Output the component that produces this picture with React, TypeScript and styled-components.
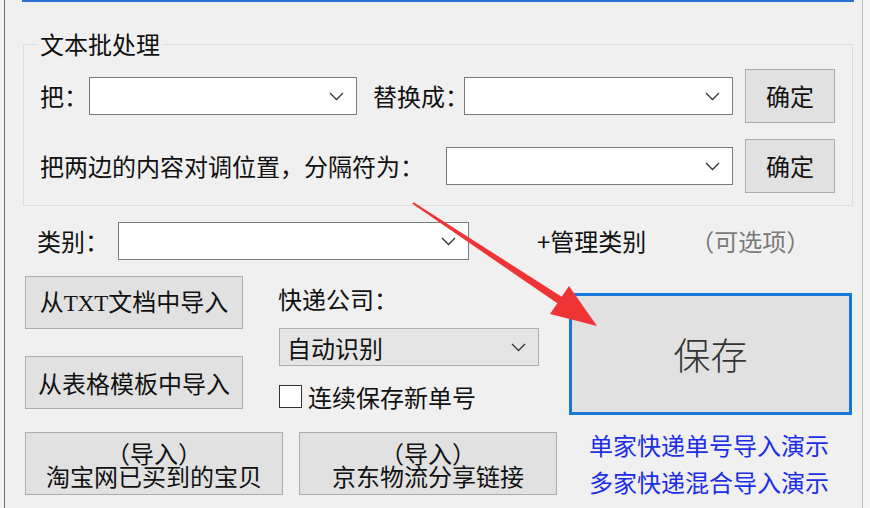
import React from 'react';
import styled, {createGlobalStyle} from 'styled-components';

const Global = createGlobalStyle`
  html, body {
    margin: 0;
    padding: 0;
    background: #f0f0f0;
  }
  * { box-sizing: border-box; }
`

const Screen = styled.div`
  position: relative;
  width: 870px;
  height: 508px;
  overflow: hidden;
  background: #f5f5f5;
  font-family: "Noto Sans CJK SC", "Noto Sans", sans-serif;
  font-size: 24px;
  color: #111;
`

const Frame = styled.div`
  margin-left: 4px;
  width: 859px;
  height: 508px;
  background: #f0f0f0;
  border-left: 1px solid #6e6e6e;
  border-right: 1px solid #bdbdbd;
  display: flex;
  flex-direction: column;
`

const FocusLine = styled.div`
  height: 2px;
  margin: 0 8px 0 17px;
  background: #2a6fd6;
`

const Group = styled.fieldset`
  margin: 27px 9px 0 18px;
  padding: 0 16px 0 12px;
  height: 177px;
  border: 1px solid #dcdcdc;
  min-width: 0;
`

const Legend = styled.legend`
  padding: 0 4px;
  line-height: 30px;
  font-size: 24px;
`

const Row = styled.div<{$top?: number; $left?: number}>`
  display: flex;
  align-items: center;
  height: 54px;
  margin-top: ${p => p.$top ?? 0}px;
  padding-left: ${p => p.$left ?? 4}px;
`

const Label = styled.span<{$w?: number; $ml?: number}>`
  flex: none;
  width: ${p => (p.$w ? `${p.$w}px` : 'auto')};
  margin-left: ${p => p.$ml ?? 0}px;
  white-space: nowrap;
  line-height: 30px;
`

const Hint = styled(Label)`
  color: #7a7a7a;
`

const ComboBox = styled.div<{$w: number; $grey?: boolean}>`
  flex: none;
  width: ${p => p.$w}px;
  height: 38px;
  display: flex;
  align-items: center;
  justify-content: space-between;
  padding: 0 12px 0 7px;
  background: ${p => (p.$grey ? '#e5e5e5' : '#fff')};
  border: 1px solid ${p => (p.$grey ? '#adadad' : '#7a7a7a')};
`

const Button = styled.button<{$w: number; $h: number; $ml?: number}>`
  flex: none;
  width: ${p => p.$w}px;
  height: ${p => p.$h}px;
  margin-left: ${p => p.$ml ?? 0}px;
  padding: 0;
  background: #e1e1e1;
  border: 1px solid #adadad;
  font-family: inherit;
  font-size: 24px;
  line-height: 24px;
  color: #111;
`

const Line = styled.span`
  display: block;
  height: 23px;
  line-height: 23px;
  overflow: visible;
`

const Serif = styled.span`
  font-family: "Liberation Serif", serif;
  font-size: 23px;
`

const Main = styled.div`
  display: grid;
  grid-template-columns: 253px 291px 283px;
  margin: 16px 0 0 20px;
  height: 139px;
`

const Stack = styled.div<{$gap: number}>`
  display: flex;
  flex-direction: column;
  gap: ${p => p.$gap}px;
`

const Courier = styled.div`
  display: flex;
  flex-direction: column;
`

const SelectWrap = styled.div`
  margin: 14px 0 0 1px;
`

const CheckRow = styled.label`
  display: flex;
  align-items: center;
  gap: 6px;
  margin: 19px 0 0 1px;
  height: 23px;
  line-height: 30px;
`

const Box = styled.span`
  flex: none;
  width: 23px;
  height: 23px;
  background: #fff;
  border: 1px solid #333;
`

const SaveButton = styled.button`
  margin-top: 17px;
  height: 122px;
  width: 283px;
  background: #e1e1e1;
  border: 3px solid #1677d9;
  font-family: inherit;
  font-size: 37px;
  font-weight: 300;
  color: #333;
`

const Bottom = styled.div`
  display: flex;
  margin: 17px 0 0 20px;
  gap: 16px;
`

const Links = styled.div`
  margin: -6px 0 0 16px;
  width: 240px;
  display: flex;
  flex-direction: column;
  align-items: center;
  line-height: 37px;
  font-size: 24px;
  color: #1c2ee6;
`

const Link = styled.span`
  cursor: pointer;
  white-space: nowrap;
`

const Overlay = styled.svg`
  position: absolute;
  left: 0;
  top: 0;
  pointer-events: none;
`

const Chevron: React.FC = () => (
  <svg width="15" height="9" viewBox="0 0 15 9">
    <polyline points="1,1 7.5,7.5 14,1" fill="none" stroke="#333" strokeWidth="1.3" />
  </svg>
)

const Combo: React.FC<{w: number; grey?: boolean; text?: string}> = ({w, grey, text}) => (
  <ComboBox $w={w} $grey={grey}>
    <span>{text}</span>
    <Chevron />
  </ComboBox>
)

const App: React.FC = () => {
  return (
    <Screen>
      <Global />
      <Frame>
        <FocusLine />
        <Group>
          <Legend>文本批处理</Legend>
          <Row $top={10}>
            <Label $w={49}>把：</Label>
            <Combo w={268} />
            <Label $w={91} $ml={16}>替换成：</Label>
            <Combo w={269} />
            <Button $w={90} $h={54} $ml={12}>确定</Button>
          </Row>
          <Row $top={16}>
            <Label $w={406}>把两边的内容对调位置，分隔符为：</Label>
            <Combo w={287} />
            <Button $w={90} $h={54} $ml={12}>确定</Button>
          </Row>
        </Group>

        <Row $top={16} $left={32} style={{height: 38}}>
          <Label $w={81}>类别：</Label>
          <Combo w={351} />
          <Label $ml={68}>+管理类别</Label>
          <Hint $ml={44}>（可选项）</Hint>
        </Row>

        <Main>
          <Stack $gap={27}>
            <Button $w={218} $h={53}>从<Serif>TXT</Serif>文档中导入</Button>
            <Button $w={218} $h={53}>从表格模板中导入</Button>
          </Stack>
          <Courier>
            <Label style={{marginTop: 8}}>快递公司：</Label>
            <SelectWrap>
              <Combo w={260} grey text="自动识别" />
            </SelectWrap>
            <CheckRow>
              <Box />
              连续保存新单号
            </CheckRow>
          </Courier>
          <SaveButton>保存</SaveButton>
        </Main>

        <Bottom>
          <Button $w={258} $h={63}>
            <Line>（导入）</Line>
            <Line>淘宝网已买到的宝贝</Line>
          </Button>
          <Button $w={258} $h={63}>
            <Line>（导入）</Line>
            <Line>京东物流分享链接</Line>
          </Button>
          <Links>
            <Link>单家快递单号导入演示</Link>
            <Link>多家快递混合导入演示</Link>
          </Links>
        </Bottom>
      </Frame>

      <Overlay width="870" height="508" viewBox="0 0 870 508">
        <polygon
          points="413.6,202.2 561.7,296.7 569,286 597,326 550,314 557.3,303.3 412.4,203.8"
          fill="#ee3434"
        />
      </Overlay>
    </Screen>
  )
}

export default App
